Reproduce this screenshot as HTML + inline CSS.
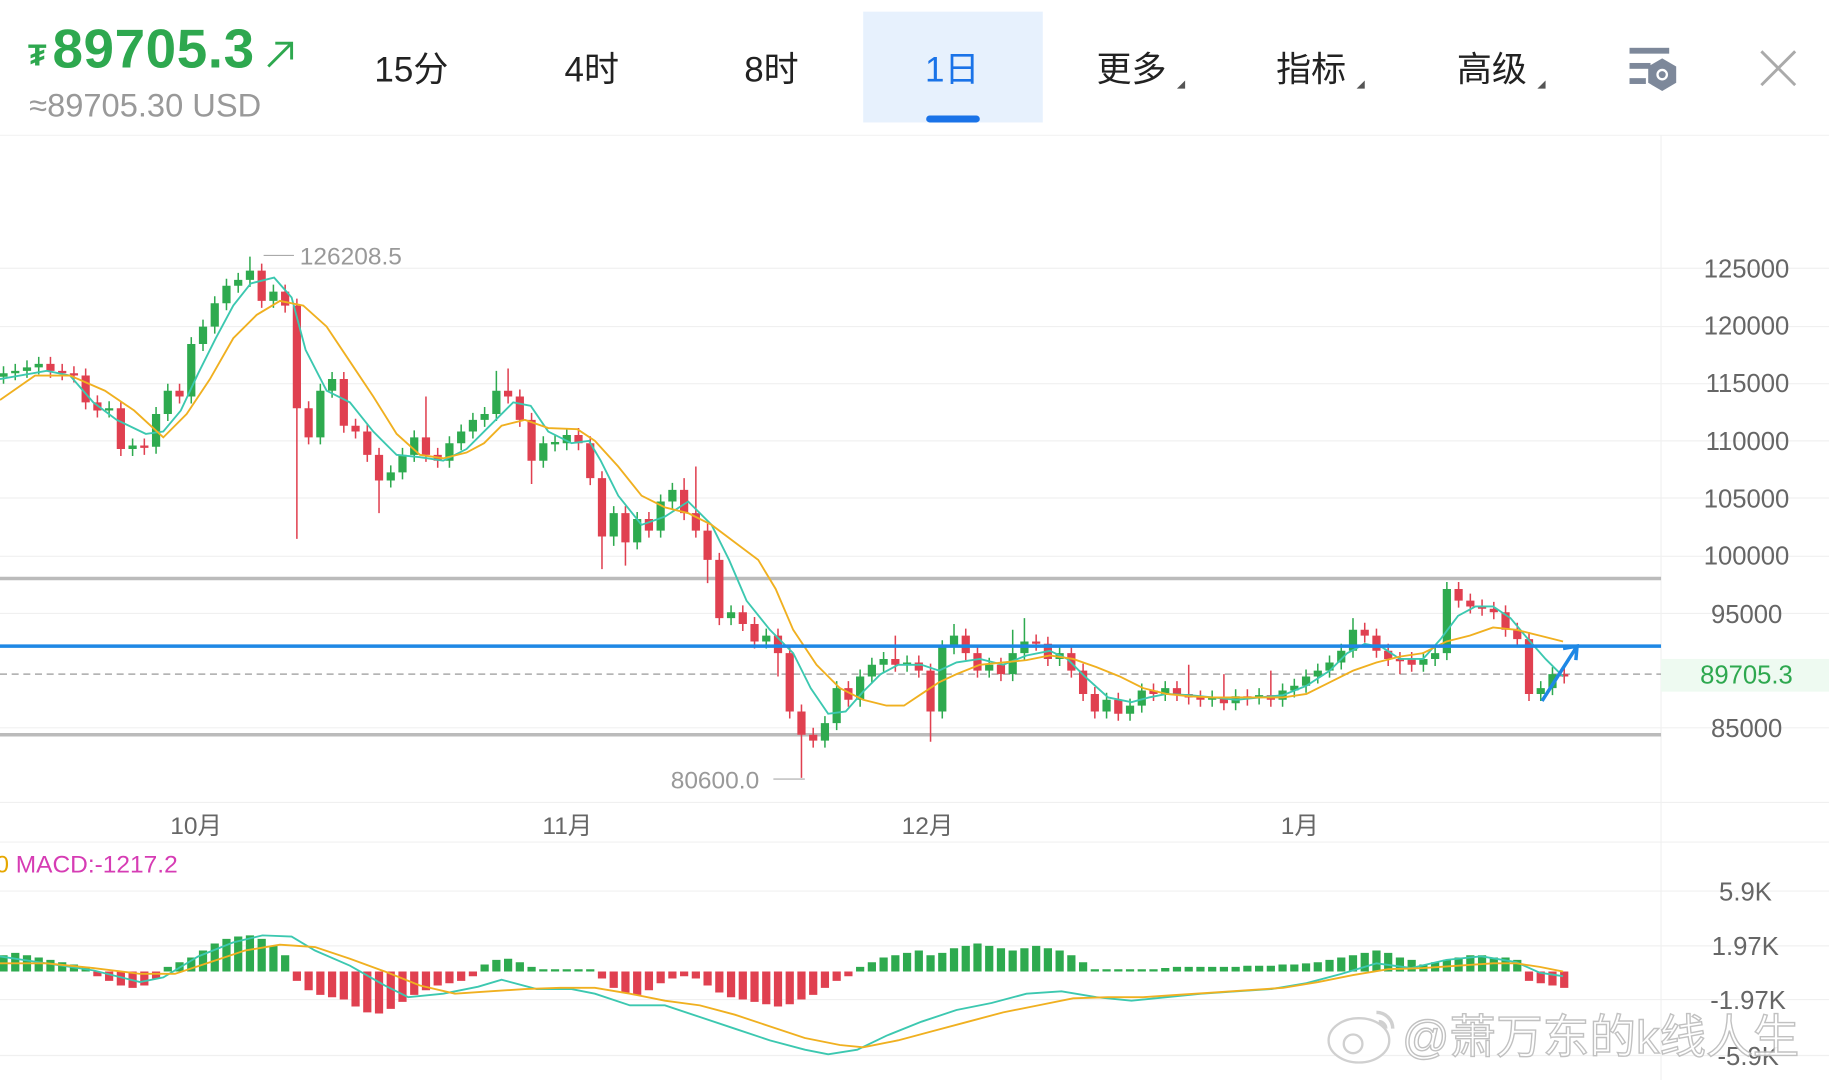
<!DOCTYPE html>
<html><head><meta charset="utf-8"><style>
html,body{margin:0;padding:0;background:#fff;width:1829px;height:1080px;overflow:hidden}
svg{display:block}
text{font-family:"Liberation Sans","Noto Sans CJK SC",sans-serif}
</style></head><body>
<svg width="1829" height="1080" viewBox="0 0 1568 926" preserveAspectRatio="none" xmlns="http://www.w3.org/2000/svg">
<rect width="1568" height="926" fill="#fff"/>
<text x="24" y="56" font-size="26" font-weight="bold" fill="#2ea84f">₮</text>
<text x="45" y="58" font-size="47" font-weight="bold" fill="#2ea84f" letter-spacing="0.5">89705.3</text>
<path d="M230 57 L250 37 M236 37 L250 37 L250 51" stroke="#2ea84f" stroke-width="2.5" fill="none"/>
<text x="25" y="100" font-size="28" fill="#999">≈89705.30 USD</text>
<rect x="740" y="10" width="154" height="95" fill="#e7f1fd"/>
<rect x="794" y="99" width="46" height="6" rx="3" fill="#1a73e8"/>
<g font-size="30" fill="#222">
<text x="321" y="70">15分</text><text x="484" y="70">4时</text><text x="638" y="70">8时</text>
<text x="793" y="70" fill="#1a73e8">1日</text>
<text x="940" y="70">更多</text><text x="1094" y="70">指标</text><text x="1249" y="70">高级</text>
</g>
<g fill="#555"><path d="M1009 76 L1016 76 L1016 69Z"/><path d="M1163 76 L1170 76 L1170 69Z"/><path d="M1318 76 L1325 76 L1325 69Z"/></g>
<g fill="#7d889a"><rect x="1397" y="41" width="34" height="5"/><rect x="1397" y="54" width="18" height="5"/><rect x="1397" y="67" width="14" height="5"/>
<path d="M1425 50 L1437 57 L1437 71 L1425 78 L1413 71 L1413 57Z"/></g>
<circle cx="1425" cy="64" r="5" fill="#fff"/><circle cx="1425" cy="64" r="3" fill="#7d889a"/>
<path d="M1510 44 L1539 73 M1539 44 L1510 73" stroke="#aaa" stroke-width="2.5"/>
<line x1="0" y1="116" x2="1568" y2="116" stroke="#f2f2f2"/>
<g stroke="#f0f0f0" stroke-width="1">
<line x1="0" y1="230" x2="1568" y2="230"/><line x1="0" y1="280" x2="1568" y2="280"/><line x1="0" y1="329" x2="1568" y2="329"/><line x1="0" y1="378" x2="1568" y2="378"/><line x1="0" y1="427" x2="1568" y2="427"/><line x1="0" y1="477" x2="1568" y2="477"/><line x1="0" y1="526" x2="1568" y2="526"/><line x1="0" y1="624" x2="1568" y2="624"/>
<line x1="1424" y1="116" x2="1424" y2="926"/>
<line x1="0" y1="688" x2="1568" y2="688"/><line x1="0" y1="722" x2="1568" y2="722"/>
<line x1="0" y1="764" x2="1568" y2="764"/><line x1="0" y1="811" x2="1568" y2="811"/><line x1="0" y1="857" x2="1568" y2="857"/><line x1="0" y1="905" x2="1568" y2="905"/>
</g>
<g font-size="22" fill="#666" text-anchor="end">
<text x="1534" y="238">125000</text><text x="1534" y="287">120000</text><text x="1534" y="336">115000</text><text x="1534" y="386">110000</text><text x="1534" y="435">105000</text><text x="1534" y="484">100000</text><text x="1528" y="534">95000</text><text x="1528" y="632">85000</text>
<text x="1519" y="772">5.9K</text><text x="1525" y="819">1.97K</text><text x="1531" y="865">-1.97K</text><text x="1525" y="913">-5.9K</text>
</g>
<rect x="1424" y="565" width="144" height="28" fill="#eefaf1"/>
<text x="1537" y="586" font-size="22" fill="#2ea84f" text-anchor="end">89705.3</text>
<g font-size="21" fill="#666"><text x="146" y="715">10月</text><text x="465" y="715">11月</text><text x="773" y="715">12月</text><text x="1098" y="715">1月</text></g>
<text x="-4" y="748" font-size="21" fill="#d63cb4"><tspan fill="#e6a700">0</tspan> MACD:-1217.2</text>
<line x1="0" y1="496" x2="1424" y2="496" stroke="#bbb" stroke-width="3"/>
<line x1="0" y1="630" x2="1424" y2="630" stroke="#bbb" stroke-width="3"/>
<line x1="0" y1="578" x2="1424" y2="578" stroke="#aaa" stroke-width="1.2" stroke-dasharray="6 4"/>

<g transform="scale(1.006 1)">
<path fill="none" stroke="#2eaa4f" stroke-width="1.3" d="M3 314V329M13 312V326M23 309V324M33 306V321M93 344V358M113 376V391M133 349V389M143 329V361M163 289V346M173 274V301M183 254V286M193 239V266M203 234V251M213 220V246M233 244V264M273 329V381M283 319V341M333 399V418M343 384V411M353 369V396M383 374V401M393 364V386M403 354V376M413 349V366M423 318V361M463 374V401M473 373V387M483 367V386M523 434V468M543 439V471M563 424V461M573 414V436M623 519V536M653 539V556M703 614V641M713 584V626M733 574V606M743 564V586M753 559V576M773 562V576M803 549V616M813 535V561M843 564V581M863 540V584M873 530V566M903 554V571M943 594V616M963 599V618M973 586V611M993 584V601M1033 592V606M1053 591V609M1073 590V604M1093 586V606M1103 582V598M1113 574V594M1123 569V586M1133 562V581M1143 552V574M1153 530V564M1213 559V576M1223 554V571M1233 499V566M1313 584V601M1323 572V596"/>
<path fill="#2eaa4f" d="M-0.5 320h7v3h-7zM9.5 318h7v2h-7zM19.5 315h7v3h-7zM29.5 312h7v3h-7zM89.5 350h7v2h-7zM109.5 382h7v3h-7zM129.5 355h7v28h-7zM139.5 335h7v20h-7zM159.5 295h7v45h-7zM169.5 280h7v15h-7zM179.5 260h7v20h-7zM189.5 245h7v15h-7zM199.5 240h7v5h-7zM209.5 232h7v8h-7zM229.5 250h7v8h-7zM269.5 335h7v40h-7zM279.5 325h7v10h-7zM329.5 405h7v7h-7zM339.5 390h7v15h-7zM349.5 375h7v15h-7zM379.5 380h7v15h-7zM389.5 370h7v10h-7zM399.5 360h7v10h-7zM409.5 355h7v5h-7zM419.5 335h7v20h-7zM459.5 380h7v15h-7zM469.5 379h7v2h-7zM479.5 373h7v7h-7zM519.5 440h7v20h-7zM539.5 445h7v20h-7zM559.5 430h7v25h-7zM569.5 420h7v10h-7zM619.5 525h7v5h-7zM649.5 545h7v5h-7zM699.5 620h7v15h-7zM709.5 590h7v30h-7zM729.5 580h7v20h-7zM739.5 570h7v10h-7zM749.5 565h7v5h-7zM769.5 568h7v2h-7zM799.5 555h7v55h-7zM809.5 545h7v10h-7zM839.5 570h7v5h-7zM859.5 560h7v18h-7zM869.5 550h7v10h-7zM899.5 560h7v5h-7zM939.5 600h7v10h-7zM959.5 605h7v7h-7zM969.5 592h7v13h-7zM989.5 590h7v5h-7zM1029.5 598h7v2h-7zM1049.5 597h7v6h-7zM1069.5 596h7v2h-7zM1089.5 592h7v8h-7zM1099.5 588h7v4h-7zM1109.5 580h7v8h-7zM1119.5 575h7v5h-7zM1129.5 568h7v7h-7zM1139.5 558h7v10h-7zM1149.5 540h7v18h-7zM1209.5 565h7v5h-7zM1219.5 560h7v5h-7zM1229.5 505h7v55h-7zM1309.5 590h7v5h-7zM1319.5 578h7v12h-7z"/>
<path fill="none" stroke="#e04050" stroke-width="1.3" d="M43 306V324M53 312V326M63 314V328M73 316V351M83 339V358M103 344V391M123 376V390M153 329V346M223 226V264M243 244V268M253 256V462M263 344V381M293 319V371M303 359V376M313 364V396M323 384V440M363 340V396M373 384V401M433 316V346M443 334V366M453 354V415M493 367V386M503 374V416M513 404V488M533 434V485M553 439V461M583 410V446M593 400V461M603 449V500M613 474V536M633 519V541M643 529V556M663 539V580M673 554V616M683 604V667M693 624V641M723 584V606M763 545V576M783 562V581M793 569V636M823 539V566M833 554V581M853 564V584M883 544V558M893 546V571M913 554V581M923 569V601M933 589V616M953 594V618M983 586V601M1003 584V601M1013 570V604M1023 592V606M1043 578V609M1063 591V605M1083 575V606M1163 534V551M1173 539V564M1183 552V571M1193 559V578M1203 559V576M1243 499V521M1253 509V526M1263 514V528M1273 516V531M1283 519V546M1293 534V554M1303 542V601M1333 572V586"/>
<path fill="#e04050" d="M39.5 312h7v6h-7zM49.5 318h7v2h-7zM59.5 320h7v2h-7zM69.5 322h7v23h-7zM79.5 345h7v7h-7zM99.5 350h7v35h-7zM119.5 382h7v2h-7zM149.5 335h7v5h-7zM219.5 232h7v26h-7zM239.5 250h7v12h-7zM249.5 262h7v88h-7zM259.5 350h7v25h-7zM289.5 325h7v40h-7zM299.5 365h7v5h-7zM309.5 370h7v20h-7zM319.5 390h7v22h-7zM359.5 375h7v15h-7zM369.5 390h7v5h-7zM429.5 335h7v5h-7zM439.5 340h7v20h-7zM449.5 360h7v35h-7zM489.5 373h7v7h-7zM499.5 380h7v30h-7zM509.5 410h7v50h-7zM529.5 440h7v25h-7zM549.5 445h7v10h-7zM579.5 420h7v20h-7zM589.5 440h7v15h-7zM599.5 455h7v25h-7zM609.5 480h7v50h-7zM629.5 525h7v10h-7zM639.5 535h7v15h-7zM659.5 545h7v15h-7zM669.5 560h7v50h-7zM679.5 610h7v20h-7zM689.5 630h7v5h-7zM719.5 590h7v10h-7zM759.5 565h7v5h-7zM779.5 568h7v7h-7zM789.5 575h7v35h-7zM819.5 545h7v15h-7zM829.5 560h7v15h-7zM849.5 570h7v8h-7zM879.5 550h7v2h-7zM889.5 552h7v13h-7zM909.5 560h7v15h-7zM919.5 575h7v20h-7zM929.5 595h7v15h-7zM949.5 600h7v12h-7zM979.5 592h7v3h-7zM999.5 590h7v5h-7zM1009.5 595h7v3h-7zM1019.5 598h7v2h-7zM1039.5 598h7v5h-7zM1059.5 597h7v2h-7zM1079.5 596h7v4h-7zM1159.5 540h7v5h-7zM1169.5 545h7v13h-7zM1179.5 558h7v7h-7zM1189.5 565h7v2h-7zM1199.5 565h7v5h-7zM1239.5 505h7v10h-7zM1249.5 515h7v5h-7zM1259.5 520h7v2h-7zM1269.5 522h7v3h-7zM1279.5 525h7v15h-7zM1289.5 540h7v8h-7zM1299.5 548h7v47h-7zM1329.5 578h7v2h-7z"/>
<path fill="none" stroke="#2eaa4f" stroke-width="7" d="M3 833v-14M13 833v-16M23 833v-14M33 833v-12M43 833v-10M53 833v-8M63 833v-6M73 833v-4M143 833v-4M153 833v-8M163 833v-12M173 833v-18M183 833v-24M193 833v-28M203 833v-30M213 833v-31M223 833v-28M233 833v-22M243 833v-14M413 833v-6M423 833v-10M433 833v-11M443 833v-8M453 833v-4M463 833v-2M473 833v-2M483 833v-2M493 833v-2M503 833v-2M733 833v-4M743 833v-8M753 833v-12M763 833v-14M773 833v-16M783 833v-18M793 833v-14M803 833v-16M813 833v-20M823 833v-22M833 833v-24M843 833v-22M853 833v-20M863 833v-18M873 833v-20M883 833v-22M893 833v-20M903 833v-18M913 833v-14M923 833v-8M933 833v-2M943 833v-2M953 833v-2M963 833v-2M973 833v-2M983 833v-2M993 833v-3M1003 833v-4M1013 833v-4M1023 833v-4M1033 833v-4M1043 833v-4M1053 833v-4M1063 833v-5M1073 833v-5M1083 833v-5M1093 833v-6M1103 833v-6M1113 833v-7M1123 833v-8M1133 833v-10M1143 833v-12M1153 833v-14M1163 833v-16M1173 833v-18M1183 833v-16M1193 833v-12M1203 833v-10M1213 833v-6M1223 833v-8M1233 833v-10M1243 833v-12M1253 833v-14M1263 833v-14M1273 833v-12M1283 833v-12M1293 833v-10"/>
<path fill="none" stroke="#e04050" stroke-width="7" d="M83 833v4M93 833v8M103 833v12M113 833v14M123 833v12M133 833v6M253 833v8M263 833v16M273 833v20M283 833v22M293 833v24M303 833v30M313 833v35M323 833v36M333 833v32M343 833v26M353 833v20M363 833v16M373 833v12M383 833v10M393 833v8M403 833v4M513 833v6M523 833v14M533 833v18M543 833v20M553 833v16M563 833v10M573 833v6M583 833v4M593 833v6M603 833v12M613 833v18M623 833v22M633 833v24M643 833v26M653 833v28M663 833v30M673 833v28M683 833v24M693 833v20M703 833v14M713 833v8M723 833v4M1303 833v8M1313 833v10M1323 833v12M1333 833v14"/>
</g>
<polyline fill="none" stroke="#3cc8b0" stroke-width="1.6" points="0,325 40,318 60,322 80,345 100,360 125,372 140,370 155,352 170,320 185,290 200,262 215,243 235,238 250,255 262,300 280,335 300,345 320,370 340,390 360,392 380,395 400,385 420,365 440,345 455,348 470,370 490,380 505,378 515,395 530,425 550,450 570,443 590,430 610,450 625,480 640,515 660,540 680,560 695,590 710,612 725,610 740,593 755,578 770,570 790,570 805,575 820,568 840,565 860,570 880,562 900,558 915,565 930,580 950,598 970,602 985,598 1000,595 1020,596 1040,598 1060,600 1080,598 1100,596 1120,588 1140,575 1155,560 1170,552 1185,555 1200,565 1220,565 1235,548 1250,528 1265,520 1280,520 1295,530 1310,548 1325,565 1340,580"/>
<polyline fill="none" stroke="#f0b020" stroke-width="1.6" points="0,343 30,322 60,322 90,335 115,352 140,375 160,355 180,325 200,290 220,270 240,258 260,262 280,280 300,310 320,340 340,372 360,390 380,393 400,388 415,380 430,365 450,360 470,367 495,368 510,378 530,400 550,425 570,435 590,440 610,450 630,465 650,480 665,505 680,540 700,570 720,590 740,600 760,605 775,605 790,595 805,585 820,578 840,570 860,568 880,566 900,562 920,565 940,572 960,580 980,590 1000,595 1020,597 1040,598 1070,598 1100,598 1120,595 1140,585 1160,575 1180,568 1200,563 1220,560 1240,550 1260,545 1280,538 1300,540 1320,545 1340,550"/>
<polyline fill="none" stroke="#3cc8b0" stroke-width="1.6" points="0,820 40,826 80,832 120,842 140,838 170,820 200,808 225,802 250,803 270,815 300,828 330,845 350,855 380,852 410,846 430,840 460,848 490,848 510,852 540,862 570,862 600,872 630,882 660,892 690,900 710,904 735,900 760,888 790,876 820,866 850,860 880,852 910,850 940,855 970,858 1000,855 1030,852 1060,850 1090,848 1120,843 1150,835 1180,826 1210,830 1240,823 1270,820 1300,825 1320,834 1340,837"/>
<polyline fill="none" stroke="#f0b020" stroke-width="1.6" points="0,826 40,826 80,830 120,835 150,835 180,825 210,815 240,810 270,812 300,822 330,833 360,845 390,852 420,850 450,848 480,847 510,847 540,852 570,858 600,862 630,870 660,880 690,890 720,896 740,898 770,892 800,884 830,876 860,868 890,862 920,856 950,855 980,855 1010,853 1040,851 1070,849 1100,847 1130,842 1160,836 1190,831 1220,830 1250,828 1280,826 1300,826 1320,829 1340,833"/>

<line x1="0" y1="554" x2="1424" y2="554" stroke="#1e88e5" stroke-width="3"/>
<path d="M1322 601 L1352 554 M1340 556 L1352 554 L1351 566" stroke="#1e88e5" stroke-width="3" fill="none"/>
<line x1="226" y1="219" x2="252" y2="219" stroke="#aaa"/>
<text x="257" y="227" font-size="21" fill="#999">126208.5</text>
<text x="575" y="676" font-size="21" fill="#999">80600.0</text>
<line x1="663" y1="668" x2="690" y2="668" stroke="#aaa"/>
<g opacity="0.9">
<ellipse cx="1165" cy="892" rx="26" ry="19" fill="#fff" stroke="#ccc" stroke-width="2"/>
<circle cx="1160" cy="895" r="8" fill="none" stroke="#ccc" stroke-width="2"/>
<path d="M1180 868 A14 14 0 0 1 1194 882 M1182 876 A6 6 0 0 1 1188 882" stroke="#ccc" stroke-width="3" fill="none"/>
<text x="1202" y="903" font-size="40" fill="#fff" stroke="#bbb" stroke-width="1.2">@萧万东的k线人生</text>
</g>
</svg>
</body></html>
